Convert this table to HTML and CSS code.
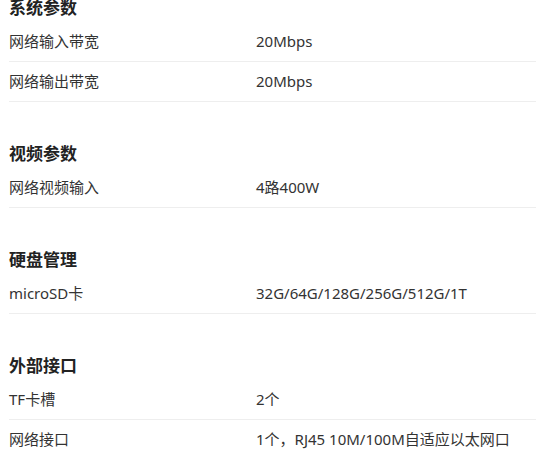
FILE: index.html
```html
<!DOCTYPE html>
<html lang="zh-CN">

<head>
    <meta charset="UTF-8">
    <meta name="viewport" content="width=device-width, initial-scale=1.0">
    <title>产品参数</title>
    <link rel="stylesheet" href="styles.css">
</head>

<body>
    <div class="spec-list">
        <div class="spec-section">
            <h3 class="spec-title">系统参数</h3>
            <div class="spec-row">
                <span class="spec-name">网络输入带宽</span>
                <span class="spec-value">20Mbps</span>
            </div>
            <div class="spec-row">
                <span class="spec-name">网络输出带宽</span>
                <span class="spec-value">20Mbps</span>
            </div>
        </div>

        <div class="spec-section">
            <h3 class="spec-title">视频参数</h3>
            <div class="spec-row">
                <span class="spec-name">网络视频输入</span>
                <span class="spec-value">4路400W</span>
            </div>
        </div>

        <div class="spec-section">
            <h3 class="spec-title">硬盘管理</h3>
            <div class="spec-row">
                <span class="spec-name">microSD卡</span>
                <span class="spec-value">32G/64G/128G/256G/512G/1T</span>
            </div>
        </div>

        <div class="spec-section">
            <h3 class="spec-title">外部接口</h3>
            <div class="spec-row">
                <span class="spec-name">TF卡槽</span>
                <span class="spec-value">2个</span>
            </div>
            <div class="spec-row">
                <span class="spec-name">网络接口</span>
                <span class="spec-value">1个，RJ45 10M/100M自适应以太网口</span>
            </div>
        </div>
    </div>
</body>

</html>
```

FILE: styles.css
```css
* {
    margin: 0;
    padding: 0;
    box-sizing: border-box;
    font-family: "Noto Sans", "Noto Sans CJK SC", sans-serif;
}

body {
    background-color: #fff;
    color: #333;
    overflow: hidden;
}

.spec-list {
    margin-top: -5px;
    padding-left: 9px;
}

.spec-section + .spec-section {
    margin-top: 39px;
}

.spec-title {
    font-size: 17px;
    line-height: 25px;
    font-weight: 700;
    color: #222;
    margin-bottom: 2px;
}

.spec-row {
    display: grid;
    grid-template-columns: 247px 1fr;
    font-size: 15px;
    line-height: 39px;
    border-bottom: 1px solid #eee;
}
```
